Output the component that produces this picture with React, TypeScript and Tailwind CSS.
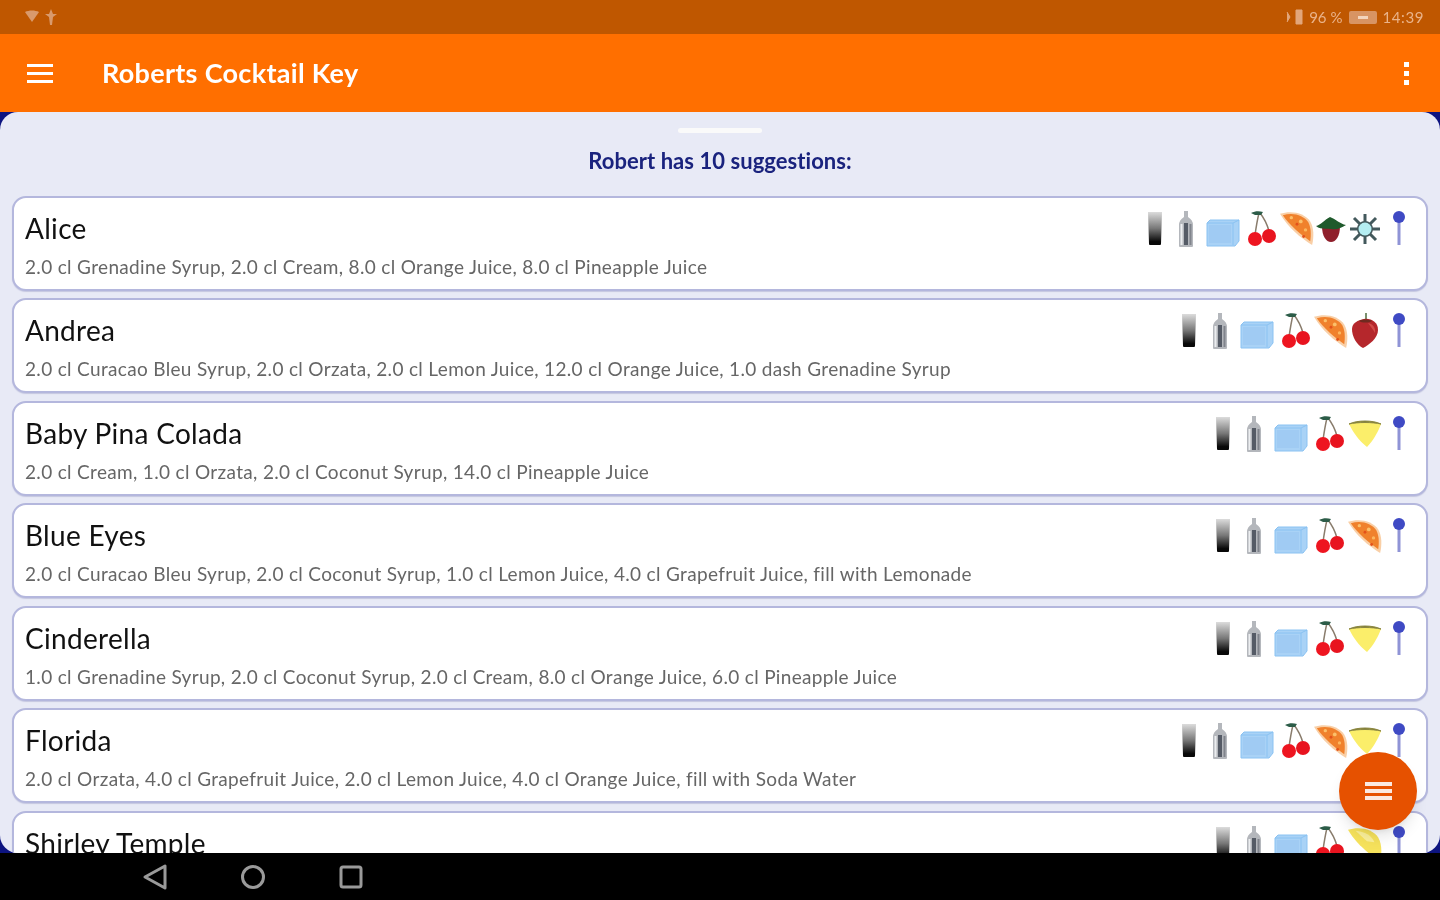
import { useId } from "react";

function Slot({ w, children }: { w: string; children: React.ReactNode }) {
    return <div className={`flex justify-center items-center h-[40px] shrink-0 ${w}`}>{children}</div>;
}

function Glass() {
    const id = useId();
    return (
        <Slot w="w-[30px]">
            <svg width="16" height="36" viewBox="0 0 16 36">
                <defs>
                    <linearGradient id={id} x1="0" y1="0" x2="0" y2="1">
                        <stop offset="0" stopColor="#dcdcdc" />
                        <stop offset="0.5" stopColor="#777" />
                        <stop offset="0.9" stopColor="#080808" />
                    </linearGradient>
                </defs>
                <path d="M1 1h14l-1 32q0 1-1 1H3q-1 0-1-1z" fill={`url(#${id})`} />
            </svg>
        </Slot>
    );
}

function Shaker() {
    return (
        <Slot w="w-[32px]">
            <svg width="16" height="38" viewBox="0 0 16 38">
                <path d="M6 1h4v6q5 3 5 8v21q0 1-1 1H2q-1 0-1-1V15q0-5 5-8z" fill="#b4b7bc" />
                <path d="M6 13h4v22H6z" fill="#555b66" />
                <path d="M2.5 14h2v21h-2z" fill="#eceef0" />
                <path d="M11.5 14h2v21h-2z" fill="#80848c" />
            </svg>
        </Slot>
    );
}

function Ice() {
    return (
        <Slot w="w-[42px]">
            <svg width="34" height="30" viewBox="0 0 34 30" className="mt-[6px]">
                <path d="M1 6l3-3h29v21l-4 5H1z" fill="#a9d2f6" stroke="#8ac2f2" />
                <path d="M27 6v22M1 6h26l6-3" fill="none" stroke="#8ac2f2" />
                <path d="M3 8h22v18H3z" fill="#a0cbf3" />
            </svg>
        </Slot>
    );
}

function Cherry() {
    return (
        <Slot w="w-[36px]">
            <svg width="30" height="38" viewBox="0 0 30 38">
                <path d="M12 3C10 11 9 18 8 25M13 3c4 5 7 11 9 18" fill="none" stroke="#8a7d6d" strokeWidth="1.5" />
                <path d="M4 3c4-2 8-2 12-1l-2 3H8z" fill="#2c5c48" />
                <circle cx="8" cy="29" r="7" fill="#ee1520" />
                <circle cx="22" cy="26" r="7" fill="#e8141f" />
            </svg>
        </Slot>
    );
}

function Orange() {
    return (
        <Slot w="w-[34px]">
            <svg width="36" height="37" viewBox="0 0 36 37">
                <path d="M0 3C12-1 26 2 32 11c4 7 4 16 2 25C22 29 8 17 0 3z" fill="#f9cfa6" />
                <path d="M3 4.500C13 1 25 4 30 12c3 6 3 13 2 20C22 25 10 15 3 4.500z" fill="#f0812c" />
                <circle cx="12" cy="7" r="1.8" fill="#fbc06a" />
                <circle cx="22" cy="11" r="2" fill="#fbc06a" />
                <circle cx="27" cy="20" r="1.800" fill="#fbb65e" />
                <circle cx="18" cy="14" r="1.500" fill="#e3511a" />
                <circle cx="25" cy="27" r="1.500" fill="#e3511a" />
            </svg>
        </Slot>
    );
}

function Berry() {
    return (
        <Slot w="w-[34px]">
            <svg width="32" height="30" viewBox="0 0 32 30">
                <path d="M7 12c0 10 4 16 9 16s9-6 9-16z" fill="#8f1f2b" />
                <path d="M1 12c5-1 8-6 14-9 6 2 10 7 16 8-5 3-9 5-15 4S5 16 1 12z" fill="#1f5a2c" />
            </svg>
        </Slot>
    );
}

function Sun() {
    return (
        <Slot w="w-[34px]">
            <svg width="32" height="32" viewBox="0 0 32 32">
                <path d="M16 1v30M1 16h30M5 5l22 22M27 5L5 27" stroke="#43595c" strokeWidth="3" />
                <circle cx="16" cy="16" r="8" fill="#43595c" />
                <circle cx="16" cy="16" r="6.500" fill="#b5eef2" />
            </svg>
        </Slot>
    );
}

function Pin() {
    return (
        <Slot w="w-[34px]">
            <svg width="14" height="36" viewBox="0 0 14 36">
                <path d="M7 9v25" stroke="#8f94d6" strokeWidth="3" />
                <circle cx="7" cy="6" r="6" fill="#3f4ac4" />
            </svg>
        </Slot>
    );
}

function Strawberry() {
    return (
        <Slot w="w-[34px]">
            <svg width="28" height="36" viewBox="0 0 28 36">
                <path d="M15 0v6" stroke="#4d6b3c" strokeWidth="1.500" />
                <path d="M13 6c7-1 14 3 14 11 0 8-9 15-15 18C6 32 1 24 1 16 1 10 7 7 13 6z" fill="#b5272c" />
                <path d="M17 10c5 1 8 5 7 10-2-4-5-7-7-10z" fill="#d24a48" />
                <path d="M8 8c3-2 9-2 13 0-3 2-10 2-13 0z" fill="#6f2a20" />
            </svg>
        </Slot>
    );
}

function Pineapple() {
    return (
        <Slot w="w-[34px]">
            <svg width="34" height="30" viewBox="0 0 34 30">
                <path d="M1 5c8-4 24-4 32 0-3 8-8 17-14 23C11 22 5 13 1 5z" fill="#fbee6a" />
                <path d="M1 5c8-4 24-4 32 0-9-2-23-2-32 0z" fill="#7c7a3a" stroke="#8a8642" />
            </svg>
        </Slot>
    );
}

function PineappleWedge() {
    return (
        <Slot w="w-[34px]">
            <svg width="36" height="37" viewBox="0 0 36 37">
                <path d="M0 3C12-1 26 2 32 11c4 7 4 16 2 25C22 29 8 17 0 3z" fill="#f6e25c" />
                <path d="M8 4c10 1 17 5 20 12l-8-1z" fill="#fbf09a" />
            </svg>
        </Slot>
    );
}

const G = Glass, S = Shaker, I = Ice, C = Cherry, O = Orange, B = Berry, U = Sun, P = Pin, T = Strawberry, A = Pineapple, W = PineappleWedge;

type Drink = { name: string; recipe: string; icons: (() => React.ReactNode)[] };

const drinks: Drink[] = [
    { name: "Alice", recipe: "2.0 cl Grenadine Syrup, 2.0 cl Cream, 8.0 cl Orange Juice, 8.0 cl Pineapple Juice", icons: [G, S, I, C, O, B, U, P] },
    { name: "Andrea", recipe: "2.0 cl Curacao Bleu Syrup, 2.0 cl Orzata, 2.0 cl Lemon Juice, 12.0 cl Orange Juice, 1.0 dash Grenadine Syrup", icons: [G, S, I, C, O, T, P] },
    { name: "Baby Pina Colada", recipe: "2.0 cl Cream, 1.0 cl Orzata, 2.0 cl Coconut Syrup, 14.0 cl Pineapple Juice", icons: [G, S, I, C, A, P] },
    { name: "Blue Eyes", recipe: "2.0 cl Curacao Bleu Syrup, 2.0 cl Coconut Syrup, 1.0 cl Lemon Juice, 4.0 cl Grapefruit Juice, fill with Lemonade", icons: [G, S, I, C, O, P] },
    { name: "Cinderella", recipe: "1.0 cl Grenadine Syrup, 2.0 cl Coconut Syrup, 2.0 cl Cream, 8.0 cl Orange Juice, 6.0 cl Pineapple Juice", icons: [G, S, I, C, A, P] },
    { name: "Florida", recipe: "2.0 cl Orzata, 4.0 cl Grapefruit Juice, 2.0 cl Lemon Juice, 4.0 cl Orange Juice, fill with Soda Water", icons: [G, S, I, C, O, A, P] },
    { name: "Shirley Temple", recipe: "", icons: [G, S, I, C, W, P] },
];

function DrinkCard({ drink }: { drink: Drink }) {
    return (
        <div className="h-[95px] shrink-0 bg-white rounded-[14px] border-2 border-[#b4b7dd] shadow-[0_1px_1px_#c5c7e0] pl-[11px] pr-[10px] pt-[11px] flex flex-col">
            <div className="flex justify-between h-[40px]">
                <div className="text-[28px] leading-[38px] tracking-[0.3px] text-[#111111]">{drink.name}</div>
                <div className="flex">
                    {drink.icons.map((Icon, i) => (
                        <Icon key={i} />
                    ))}
                </div>
            </div>
            <div className="text-[19px] leading-[24px] tracking-[0.33px] mt-[6px] text-[#666666] whitespace-nowrap">{drink.recipe}</div>
        </div>
    );
}

export default function App() {
    return (
        <div className="relative h-[900px] w-[1440px] overflow-hidden flex flex-col bg-[#0d1480] font-['Lato',sans-serif] blur-[0.7px]">
            {/* status bar */}
            <div className="h-[34px] shrink-0 bg-[#bf5700] flex items-center justify-between pl-[24px] pr-[16px] text-[15px] text-[#eab389]">
                <div className="flex gap-[5px] items-center">
                    <svg width="16" height="14" viewBox="0 0 16 14">
                        <path d="M1 2c4-2 10-2 14 0L8 12z" fill="#d99a6c" />
                    </svg>
                    <svg width="12" height="16" viewBox="0 0 12 16">
                        <path d="M6 0l2 5h4L8 8l-1 8H5L4 8 0 5h4z" fill="#d99a6c" />
                    </svg>
                </div>
                <div className="flex items-center gap-[5px]">
                    <svg width="20" height="16" viewBox="0 0 20 16">
                        <path d="M3 3l3 5-3 5M12 1h6v14h-6z" fill="#e2a67a" stroke="#e2a67a" />
                    </svg>
                    <span>96 %</span>
                    <div className="w-[28px] h-[13px] bg-[#d89463] rounded-[2px] ml-[2px] flex items-center justify-center">
                        <div className="w-[10px] h-[3px] bg-[#f3d5bd]" />
                    </div>
                    <span className="tracking-[0.6px]">14:39</span>
                </div>
            </div>

            {/* app bar */}
            <div className="h-[78px] shrink-0 bg-[#ff6f00] flex items-center pl-[27px] pr-[31px] text-white">
                <div className="flex flex-col gap-[5px] w-[26px]">
                    <div className="h-[3px] bg-white" />
                    <div className="h-[3px] bg-white" />
                    <div className="h-[3px] bg-white" />
                </div>
                <div className="ml-[49px] text-[27px] font-bold tracking-[0.3px]">Roberts Cocktail Key</div>
                <div className="ml-auto flex flex-col gap-[4px] w-[5px]">
                    <div className="h-[5px] bg-white" />
                    <div className="h-[5px] bg-white" />
                    <div className="h-[5px] bg-white" />
                </div>
            </div>

            {/* sheet */}
            <div className="h-[741px] shrink-0 bg-[#e8eaf6] rounded-[18px] overflow-hidden flex flex-col px-[12px]">
                <div className="w-[84px] h-[5px] bg-[#fafafa] rounded-full mx-auto mt-[16px] shrink-0" />
                <div className="text-center text-[22px] font-bold leading-[30px] mt-[13px] mb-[19.5px] text-[#1a237e] tracking-[0.05px] shrink-0">
                    Robert has 10 suggestions:
                </div>
                <div className="flex flex-col gap-[7.6px]">
                    {drinks.map((d) => (
                        <DrinkCard key={d.name} drink={d} />
                    ))}
                </div>
            </div>

            {/* nav bar */}
            <div className="flex-1 bg-black flex items-center pl-[142px] gap-[62px]">
                <svg width="26" height="28" viewBox="0 0 26 28">
                    <path d="M23 3v22L3 14z" fill="none" stroke="#9a9a9a" strokeWidth="3" strokeLinejoin="round" />
                </svg>
                <svg width="26" height="28" viewBox="0 0 26 28" className="ml-[10px]">
                    <circle cx="13" cy="14" r="10.5" fill="none" stroke="#9a9a9a" strokeWidth="3" />
                </svg>
                <svg width="26" height="28" viewBox="0 0 26 28" className="ml-[10px]">
                    <rect x="3" y="4" width="20" height="20" rx="2" fill="none" stroke="#9a9a9a" strokeWidth="3" />
                </svg>
            </div>

            {/* fab */}
            <div className="absolute left-[1339px] top-[752px] w-[78px] h-[78px] rounded-full bg-[#e65100] shadow-lg flex flex-col items-center justify-center gap-[3px]">
                <div className="w-[27px] h-[4px] bg-[#fbe9e0]" />
                <div className="w-[27px] h-[4px] bg-[#fbe9e0]" />
                <div className="w-[27px] h-[4px] bg-[#fbe9e0]" />
            </div>
        </div>
    );
}
